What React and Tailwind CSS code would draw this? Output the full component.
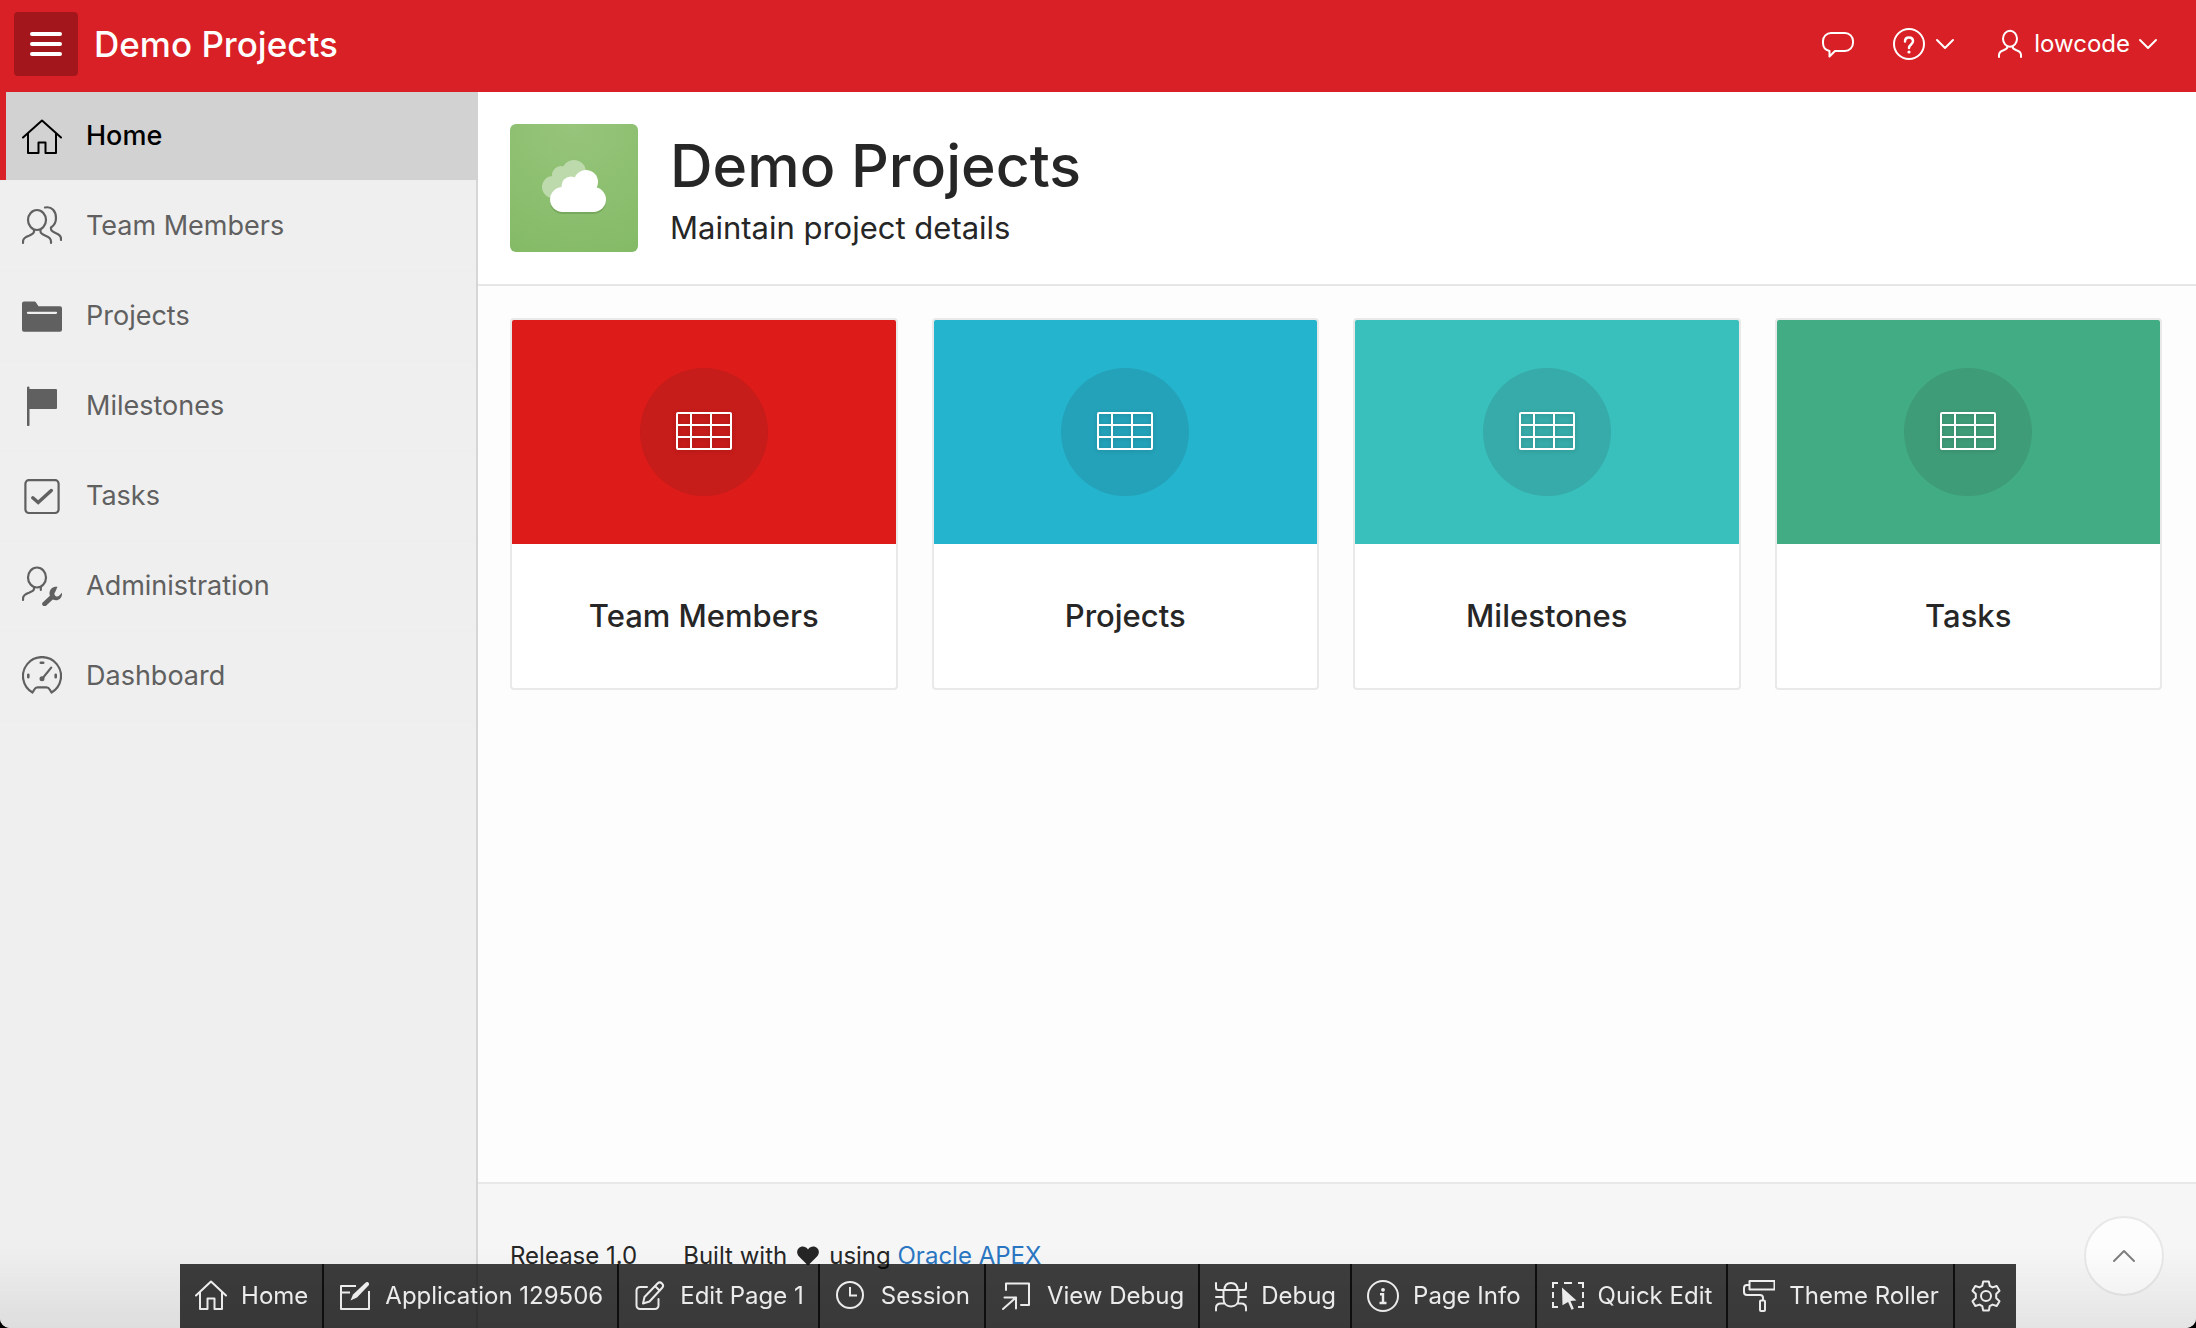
import React from "react";

function Icon({ size = 40, children, className = "", strokeWidth = 2.2 }) {
  return (
    <svg
      width={size}
      height={size}
      viewBox={`0 0 ${size} ${size}`}
      fill="none"
      stroke="currentColor"
      strokeWidth={strokeWidth}
      aria-hidden="true"
      className={`shrink-0 ${className}`}
    >
      {children}
    </svg>
  );
}

const navItems = [
  {
    label: "Home",
    icon: (
      <Icon strokeWidth={2}>
        <path strokeLinecap="round" strokeLinejoin="round" d="M1 21.500 20 4.500 39 21.500M6 17.500V37h10.500V26.500h7V37H34V17.500" />
      </Icon>
    ),
  },
  {
    label: "Team Members",
    icon: (
      <Icon>
        <ellipse cx="15" cy="14" rx="9" ry="10" />
        <path
          strokeLinecap="round"
          d="M12 24v1.500c0 2-2 3-5 4.200C3 31 1 32.500 1 35.500V37M18.500 24v1.500c0 2 2 3 5 4.200 4 1.500 5.500 3 5.500 5.800V37M23 1.500c7-1.500 11 4 11 10.500 0 4-2 7.500-5 9.500V23c0 2 2 3 5 4.200 4 1.500 5 3 5 5.500V34"
        />
      </Icon>
    ),
  },
  {
    label: "Projects",
    icon: (
      <Icon>
        <path
          stroke="none"
          fill="currentColor"
          fillRule="evenodd"
          d="M2 5.500h10c1 0 1.500.3 2 1l2.500 3.700H38a2 2 0 0 1 2 2v21.500a2 2 0 0 1-2 2H2a2 2 0 0 1-2-2V7.500a2 2 0 0 1 2-2ZM6 15.700a1 1 0 0 0 0 2.300h28a1 1 0 0 0 0-2.300Z"
        />
      </Icon>
    ),
  },
  {
    label: "Milestones",
    icon: (
      <Icon>
        <path stroke="none" fill="currentColor" d="M5 1.800a1.200 1.200 0 0 1 2.500 0V3H34a1 1 0 0 1 1 1v18a1 1 0 0 1-1 1H7.500v16a1.200 1.200 0 0 1-2.500 0Z" />
      </Icon>
    ),
  },
  {
    label: "Tasks",
    icon: (
      <Icon>
        <rect x="3.400" y="4.200" width="33.200" height="32.800" rx="3.500" />
        <path strokeWidth="3.500" strokeLinecap="round" d="M10.800 21.800 16.200 26.500 29.300 14.500" />
      </Icon>
    ),
  },
  {
    label: "Administration",
    icon: (
      <Icon>
        <ellipse cx="15" cy="11.500" rx="9" ry="10" />
        <path strokeLinecap="round" d="M12 21.500V23c0 1.500-2 2.500-5 3.700C3 28 1 29.500 1 32.500V34M18.800 21.500V24" />
        <path strokeWidth="4.600" strokeLinecap="round" d="M22.500 38 30 31" />
        <path
          stroke="none"
          fill="currentColor"
          d="M35.500 20.800c-4-.9-8 2-8 6.400 0 4 3 7 6.500 7 3.700 0 6.400-3.200 6-7.400l-3 3c-1 1-2.500 1-3.400.2l-.6-.6c-.9-1-.8-2.400.2-3.400Z"
        />
      </Icon>
    ),
  },
  {
    label: "Dashboard",
    icon: (
      <Icon>
        <path
          strokeLinejoin="round"
          strokeLinecap="round"
          d="M10.500 36.500A19 19 0 1 1 29.500 36.500L27.500 33.200C26.800 31.800 26 31.300 24.500 31.300H15.500C14 31.300 13.200 31.800 12.500 33.200Z"
        />
        <path strokeLinecap="round" strokeWidth="2.600" d="M18.800 6.700h2.400M6.300 18.800v2.400M33.700 18.800v2.400" />
        <path strokeLinecap="round" strokeWidth="2" d="M20 23 29.300 11.500" />
        <circle cx="20" cy="22.800" r="2.500" fill="currentColor" stroke="none" />
      </Icon>
    ),
  },
];

function Gear() {
  const d =
    "M13.200 1.500h5.600l.9 4.300 2.800 1.600 4.200-1.400 2.800 4.800-3.300 3.200v4l3.300 3.200-2.800 4.800-4.200-1.400-2.800 1.600-.9 4.300h-5.600l-.9-4.300-2.800-1.600-4.200 1.400-2.800-4.800 3.300-3.200v-4L2.500 10.800 5.300 6l4.200 1.400 2.800-1.600Z";
  return (
    <Icon size={32} strokeWidth={2}>
      <path strokeLinejoin="round" d={d} />
      <circle cx="16" cy="16" r="5" />
    </Icon>
  );
}

const devItems = [
  {
    label: "Home",
    icon: <path strokeLinecap="round" strokeLinejoin="round" d="M1 15.500 16 1.500 31 15.500M5 12v17h7.500V18.500h7V29H27V12" />,
  },
  {
    label: "Application 129506",
    icon: (
      <>
        <path strokeLinejoin="round" d="M17 6H2v23h28V11M2 12.500h9" />
        <path fill="currentColor" stroke="none" d="M26.500 2.700c2-1.700 4.700.7 3 2.800L18 17.500l-6.500 3 2.500-6Z" />
      </>
    ),
  },
  {
    label: "Edit Page 1",
    icon: (
      <>
        <path strokeLinecap="round" d="M13 7H6a3.500 3.500 0 0 0-3.500 3.500v15A3.500 3.500 0 0 0 6 29h15a3.500 3.500 0 0 0 3.500-3.500V19" />
        <path strokeLinejoin="round" d="M9 23.500l1.500-6.500L23.500 3.500a3.200 3.200 0 0 1 4.500 0 3.200 3.200 0 0 1 0 4.500L15.500 21.500ZM21 6l4.500 4.500" />
      </>
    ),
  },
  {
    label: "Session",
    icon: (
      <>
        <circle cx="15" cy="15" r="13" />
        <path d="M15 7v8.500h7" />
      </>
    ),
  },
  {
    label: "View Debug",
    icon: (
      <path strokeLinejoin="round" strokeLinecap="round" d="M5 10V3.500h23V25h-8M2 29 15 17.500M3.500 17.500H15V28.500" />
    ),
  },
  {
    label: "Debug",
    icon: (
      <path strokeLinecap="round" d="M1 3v4.500C1 9.500 2 10 3.500 10h25c1.500 0 2.500-.5 2.500-2.500V3M9.500 10C9.500 5.500 12 3 16 3s6.500 2.500 6.500 7M8.500 10v8.500c0 5 3 8 7.500 8s7.500-3 7.500-8V10M1 17h7.500M23.500 17H31M1 30.500V28c0-3 2-4.500 5-4.500h4M31 30.500V28c0-3-2-4.500-5-4.500h-4" />
    ),
  },
  {
    label: "Page Info",
    icon: (
      <>
        <circle cx="16" cy="16" r="15" />
        <circle cx="16" cy="9.800" r="1.900" fill="currentColor" stroke="none" />
        <path strokeWidth="2.400" d="M13 14.200H16V23M12.500 23h7" />
      </>
    ),
  },
  {
    label: "Quick Edit",
    icon: (
      <>
        <path d="M1 8V3h5M12 3h8M26 3h5v5M1 12v6M31 12v6M1 22v5h5M31 22v5h-5" />
        <path fill="currentColor" stroke="none" d="M10 7.500 24.500 20.500 18.500 21l3.300 7.800-2.300 1-3.400-7.800-5.600 3.200Z" />
      </>
    ),
  },
  {
    label: "Theme Roller",
    icon: (
      <path strokeLinejoin="round" d="M6.500 1h25v8.500h-25ZM6.500 5H4A3 3 0 0 0 1 8v4a3 3 0 0 0 3 3h13a3 3 0 0 1 3 3v3M17 21.500a1 1 0 0 1 1-1h3a1 1 0 0 1 1 1V30a1 1 0 0 1-1 1h-3a1 1 0 0 1-1-1Z" />
    ),
  },
];

const cards = [
  { label: "Team Members", color: "bg-[#dd1c1a]" },
  { label: "Projects", color: "bg-[#25b4ce]" },
  { label: "Milestones", color: "bg-[#39bfbc]" },
  { label: "Tasks", color: "bg-[#42ad84]" },
];

function Chevron() {
  return (
    <Icon size={20} strokeWidth={2}>
      <path strokeLinecap="round" strokeLinejoin="round" d="M2 6 10 14 18 6" />
    </Icon>
  );
}

function Header() {
  return (
    <header className="flex h-[92px] shrink-0 items-center bg-[#d92026] pl-[14px] pr-[38px] text-white">
      <button
        type="button"
        aria-label="Toggle navigation"
        className="mb-1 flex size-16 flex-col items-center justify-center gap-1.5 rounded bg-[#a3171c]"
      >
        <span className="h-1 w-8 rounded-full bg-white" />
        <span className="h-1 w-8 rounded-full bg-white" />
        <span className="h-1 w-8 rounded-full bg-white" />
      </button>
      <a href="#home" className="mb-1 ml-4 text-[35px] leading-10 font-medium">
        Demo Projects
      </a>
      <div className="mb-1 ml-auto flex items-center gap-[39px]">
        <button type="button" aria-label="Feedback">
          <Icon size={32} strokeWidth={2}>
            <path strokeLinejoin="round" d="M9 5h14a8 8 0 0 1 8 8v2a8 8 0 0 1-8 8H13L7.500 28.500V23C3.500 22 1 19 1 15v-2a8 8 0 0 1 8-8Z" />
          </Icon>
        </button>
        <button type="button" aria-label="Help" className="flex items-center gap-2.5">
          <Icon size={32} strokeWidth={2}>
            <circle cx="16" cy="16" r="15" />
            <path strokeWidth="2.500" strokeLinecap="round" d="M12 13.500c0-2.500 1.500-4 4-4s4 1.600 4 3.800c0 3.200-4 3.200-4 6.700" />
            <circle cx="16" cy="24" r="1.600" fill="currentColor" stroke="none" />
          </Icon>
          <Chevron />
        </button>
        <button type="button" className="flex items-center text-2xl leading-8">
          <Icon size={32} strokeWidth={2}>
            <ellipse cx="16" cy="10.700" rx="7" ry="8" />
            <path strokeLinecap="round" d="M13.500 18.500c0 2-1.500 2.800-4 3.700-3 1-4.500 2.300-4.500 4.800v2M18.500 18.500c0 2 1.500 2.800 4 3.700 3 1 4.500 2.300 4.500 4.800v2" />
          </Icon>
          <span className="mx-2">lowcode</span>
          <Chevron />
        </button>
      </div>
    </header>
  );
}

function Sidebar() {
  return (
    <nav className="w-[478px] shrink-0 border-r-2 border-[#d6d6d6] bg-[#efefef]">
      <ul>
        {navItems.map((item, i) => (
          <li key={item.label} className="border-b-2 border-[#eeeeee]">
            <a
              href={`#${item.label}`}
              className={
                i === 0
                  ? "-mr-0.5 flex h-[88px] items-center gap-6 border-l-[6px] border-[#d92026] bg-[#d2d2d2] pl-4 text-[27px] leading-8 font-medium text-black"
                  : "flex h-[88px] items-center gap-6 pl-[22px] text-[27px] leading-8 text-[#606060]"
              }
            >
              {item.icon}
              {item.label}
            </a>
          </li>
        ))}
      </ul>
    </nav>
  );
}

function CloudTile() {
  return (
    <div className="flex size-32 shrink-0 rounded-md bg-[radial-gradient(circle_at_50%_0%,#97c57b,#84ba66)]">
      <svg width="128" height="128" viewBox="0 0 128 128" aria-hidden="true">
        <g fill="#bddaac">
          <circle cx="43" cy="63" r="11" />
          <circle cx="51" cy="51" r="9" />
          <circle cx="64" cy="48" r="12" />
          <rect x="43" y="52" width="28" height="21" />
        </g>
        <g fill="#78a85d" transform="translate(0 2)">
          <rect x="40" y="63" width="56" height="25" rx="12.500" />
        </g>
        <g fill="#fff">
          <rect x="40" y="63" width="56" height="25" rx="12.500" />
          <circle cx="61" cy="62" r="9.500" />
          <circle cx="76" cy="58" r="12" />
          <rect x="60" y="58" width="26" height="14" />
        </g>
      </svg>
    </div>
  );
}

function Card({ label, color }) {
  return (
    <a href={`#${label}`} className="flex flex-col overflow-hidden rounded border-2 border-[#e9e9e9] bg-white">
      <div className={`flex h-56 items-center justify-center ${color}`}>
        <div className="flex size-32 items-center justify-center rounded-full bg-[#202020]/12 text-white">
          <svg width="56" height="40" viewBox="0 0 56 40" fill="none" stroke="currentColor" strokeWidth="2" aria-hidden="true" className="drop-shadow-sm">
            <rect x="1" y="1" width="54" height="36" rx="1" />
            <path d="M1 13h54M1 25h54M15 1v36M35 1v36" />
          </svg>
        </div>
      </div>
      <h3 className="flex h-36 items-center justify-center text-[31px] leading-10 font-medium">{label}</h3>
    </a>
  );
}

function DevToolbar() {
  return (
    <div className="fixed inset-x-0 bottom-0 flex justify-center">
      <div className="flex h-16 bg-black/75 text-2xl leading-8 text-[#f6f6f6]">
        {devItems.map((item) => (
          <button key={item.label} type="button" className="flex items-center gap-3.5 border-r-2 border-[#0f0f0f] pr-3.5 pl-[15px]">
            <Icon size={32} strokeWidth={2}>
              {item.icon}
            </Icon>
            {item.label}
          </button>
        ))}
        <button type="button" aria-label="Options" className="flex items-center pr-3.5 pl-[15px]">
          <Gear />
        </button>
      </div>
    </div>
  );
}

export default function App() {
  return (
    <div className="min-h-screen bg-black font-['Inter','Liberation_Sans',sans-serif] text-[#262626]">
      <div className="flex min-h-screen flex-col overflow-hidden rounded-b-[10px] bg-[#fdfdfd]">
        <Header />
        <div className="flex flex-1">
          <Sidebar />
          <div className="flex min-w-0 flex-1 flex-col">
            <div className="flex items-center gap-8 border-b-2 border-[#e6e6e6] bg-white p-8">
              <CloudTile />
              <div>
                <h1 className="text-[59px] leading-[80px] font-medium">Demo Projects</h1>
                <p className="text-[31px] leading-[44px]">Maintain project details</p>
              </div>
            </div>
            <main className="grid grid-cols-4 gap-[34px] p-8 pr-[34px]">
              {cards.map((card) => (
                <Card key={card.label} {...card} />
              ))}
            </main>
            <footer className="mt-auto flex h-[146px] items-center border-t-2 border-[#e8e8e8] bg-[#f6f6f6] px-8 text-2xl leading-8">
              <span className="mr-[46px]">Release 1.0</span>
              <span className="flex items-center">
                Built with
                <svg width="22" height="20" viewBox="0 0 22 20" fill="currentColor" aria-label="love" className="mx-2.5">
                  <path d="M11 19.500 2 10.500C-.5 8-.3 4.200 1.700 2.200 4.200-.2 8.500-.1 11 3.500 13.500-.1 17.800-.2 20.300 2.200 22.300 4.200 22.500 8 20 10.500Z" />
                </svg>
                using&nbsp;
                <a href="#apex" className="text-[#2b76c2]">
                  Oracle APEX
                </a>
              </span>
            </footer>
          </div>
        </div>
      </div>
      <button
        type="button"
        aria-label="Back to top"
        className="fixed right-8 bottom-8 flex size-20 items-center justify-center rounded-full border-2 border-[#e8e8e8] bg-[#fdfdfd] text-[#808080]"
      >
        <svg width="24" height="14" viewBox="0 0 24 14" fill="none" stroke="currentColor" strokeWidth="2" strokeLinecap="round" strokeLinejoin="round" aria-hidden="true">
          <path d="M2 12 12 2 22 12" />
        </svg>
      </button>
      <DevToolbar />
      <div className="pointer-events-none fixed inset-x-0 bottom-0 h-20 rounded-b-[10px] bg-linear-to-b from-transparent to-black/7" />
    </div>
  );
}
